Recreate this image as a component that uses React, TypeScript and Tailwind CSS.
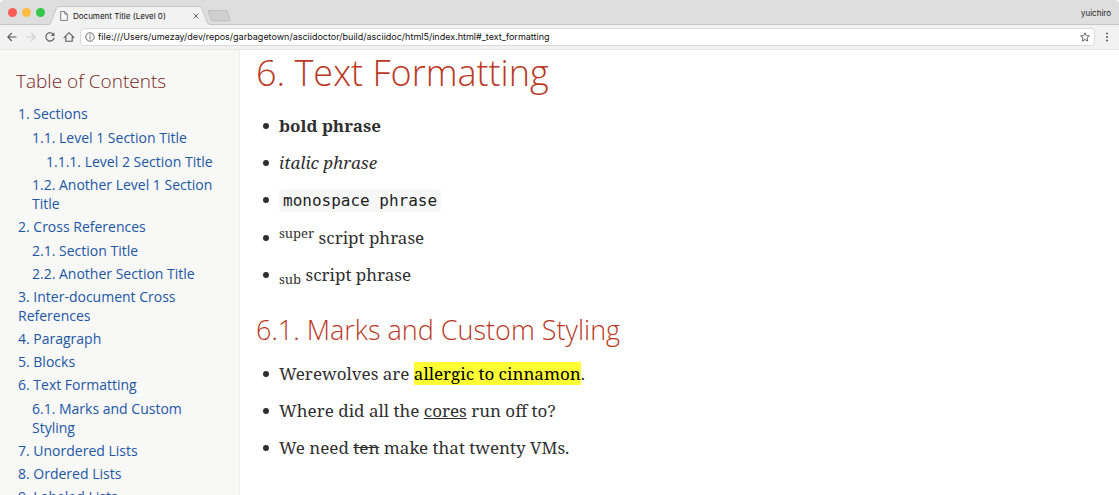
import type { ReactNode } from "react";

type Entry = { id: string; title: string; children?: Entry[] };

const toc: Entry[] = [
  {
    id: "_sections",
    title: "1. Sections",
    children: [
      {
        id: "_level_1",
        title: "1.1. Level 1 Section Title",
        children: [{ id: "_level_2", title: "1.1.1. Level 2 Section Title" }],
      },
      { id: "_another_level_1", title: "1.2. Another Level 1 Section Title" },
    ],
  },
  {
    id: "_cross_references",
    title: "2. Cross References",
    children: [
      { id: "_section_title", title: "2.1. Section Title" },
      { id: "_another_section_title", title: "2.2. Another Section Title" },
    ],
  },
  { id: "_inter_document", title: "3. Inter-document Cross References" },
  { id: "_paragraph", title: "4. Paragraph" },
  { id: "_blocks", title: "5. Blocks" },
  {
    id: "_text_formatting",
    title: "6. Text Formatting",
    children: [{ id: "_marks", title: "6.1. Marks and Custom Styling" }],
  },
  { id: "_unordered_lists", title: "7. Unordered Lists" },
  { id: "_ordered_lists", title: "8. Ordered Lists" },
  { id: "_labeled_lists", title: "9. Labeled Lists" },
];

function TocList({ entries }: { entries: Entry[] }) {
  return (
    <ul className="flex flex-col gap-1">
      {entries.map((e) => (
        <li key={e.id}>
          <a href={`#${e.id}`} className="block hover:text-[#1d4b8f]">
            {e.title}
          </a>
          {e.children && (
            <div className="mt-[5px] pl-3.5">
              <TocList entries={e.children} />
            </div>
          )}
        </li>
      ))}
    </ul>
  );
}

function Icon({ children, className = "size-3" }: { children: ReactNode; className?: string }) {
  return (
    <svg
      viewBox="0 0 12 12"
      className={className}
      fill="none"
      stroke="currentColor"
      strokeWidth="1.1"
      aria-hidden="true"
    >
      {children}
    </svg>
  );
}

function TabStrip() {
  return (
    <div className="flex h-[25px] items-end rounded-t border-b border-[#c6c6c6] bg-[#dedede]">
      <div className="flex gap-[5px] self-center pl-2">
        <button aria-label="Close window" className="size-[9px] rounded-full bg-[#fc5b57]" />
        <button aria-label="Minimize window" className="size-[9px] rounded-full bg-[#fdbc40]" />
        <button aria-label="Zoom window" className="size-[9px] rounded-full bg-[#34c84a]" />
      </div>
      <div className="relative -mb-px ml-[3px] h-[19px] w-[163px]">
        <svg
          viewBox="0 0 163 19"
          preserveAspectRatio="none"
          className="absolute inset-0 size-full"
          aria-hidden="true"
        >
          <path
            d="M0 18.5C2 18.5 2.5 17.5 3 16L8 3C8.8 1 9.5 .5 11 .5H151C152.5 .5 153.3 1 154 3L159 16C159.5 17.5 160.5 18.5 163 18.5V19H0Z"
            fill="#f2f2f2"
          />
          <path
            d="M0 18.5C2 18.5 2.5 17.5 3 16L8 3C8.8 1 9.5 .5 11 .5H151C152.5 .5 153.3 1 154 3L159 16C159.5 17.5 160.5 18.5 163 18.5"
            fill="none"
            stroke="#bdbdbd"
            strokeWidth=".8"
          />
        </svg>
        <div className="relative flex h-full items-center pr-3 pl-3">
          <svg
            viewBox="0 0 8 10"
            className="h-2.5 w-2"
            fill="#fafafa"
            stroke="#6f6f6f"
            strokeWidth=".9"
            aria-hidden="true"
          >
            <path d="M.7 .6H4.8L7.3 3.1V9.4H.7ZM4.8 .6V3.1H7.3" />
          </svg>
          <span className="ml-[5px] flex-1 text-[8px] whitespace-nowrap text-[#111]">
            Document Title (Level 0)
          </span>
          <button aria-label="Close tab" className="text-[#555]">
            <svg viewBox="0 0 6 6" className="size-1.5" stroke="currentColor" strokeWidth=".9">
              <path d="M.7 .7 5.3 5.3M5.3 .7 .7 5.3" />
            </svg>
          </button>
        </div>
      </div>
      <button aria-label="New tab" className="-ml-1 self-center pt-2">
        <svg viewBox="0 0 24 12" className="h-3 w-6" aria-hidden="true">
          <path
            d="M2 .5H18.5Q19.8 .5 20.3 1.7L22.9 9.3Q23.3 10.8 22 10.8H6Q4.600 10.8 4.1 9.5L1.2 1.9Q.7 .5 2 .5Z"
            fill="#cfcfcf"
            stroke="#b9b9b9"
            strokeWidth=".8"
          />
        </svg>
      </button>
      <button className="mr-2 ml-auto self-center pt-0.5 text-[8px] text-[#222]">yuichiro</button>
    </div>
  );
}

function Toolbar() {
  return (
    <div className="flex h-[25px] items-center border-b border-[#e4e4e4] bg-[#f2f2f2] px-1.5 text-[#5a5a5a]">
      <div className="flex gap-[7px]">
        <button aria-label="Back">
          <Icon>
            <path d="M10.5 6H2M5.8 2 1.8 6 5.8 10" />
          </Icon>
        </button>
        <button aria-label="Forward" className="text-[#cfcfcf]">
          <Icon>
            <path d="M1.5 6H10M6.2 2 10.2 6 6.2 10" />
          </Icon>
        </button>
        <button aria-label="Reload">
          <Icon>
            <path d="M9.6 3.6A4.2 4.2 0 1 0 10.2 6.6" />
            <path d="M10.4 1.3V4.9H6.8Z" fill="currentColor" stroke="none" />
          </Icon>
        </button>
        <button aria-label="Home">
          <Icon>
            <path d="M1.3 6.3 6 1.7 10.7 6.3H9.2V10.3H2.8V6.3Z" />
          </Icon>
        </button>
      </div>
      <div className="ml-[5px] flex h-[18px] flex-1 items-center rounded-sm border border-[#dadada] bg-white px-1">
        <Icon className="size-2.5">
          <circle cx="6" cy="6" r="5" />
          <path d="M6 5.2V9M6 3V4.3" />
        </Icon>
        <input
          aria-label="Address"
          className="ml-[3px] min-w-0 flex-1 bg-transparent text-[9px] text-[#111] outline-none"
          defaultValue="file:///Users/umezay/dev/repos/garbagetown/asciidoctor/build/asciidoc/html5/index.html#_text_formatting"
        />
        <button aria-label="Bookmark this page">
          <Icon className="size-2.5">
            <path d="M6 .9 7.5 4.4 11.3 4.7 8.4 7.2 9.3 11 6 9 2.7 11 3.6 7.2 .7 4.7 4.5 4.4Z" />
          </Icon>
        </button>
      </div>
      <button aria-label="Menu" className="ml-1.5">
        <svg viewBox="0 0 12 12" className="size-3" fill="currentColor" aria-hidden="true">
          <circle cx="6" cy="2.5" r="1" />
          <circle cx="6" cy="6" r="1" />
          <circle cx="6" cy="9.5" r="1" />
        </svg>
      </button>
    </div>
  );
}

function BulletList({ children }: { children: ReactNode }) {
  return (
    <ul className="flex flex-col gap-2.5 pl-[7px] font-['Noto_Serif','Droid_Serif','DejaVu_Serif',serif] text-[17px] leading-[27px]">
      {children}
    </ul>
  );
}

function Item({ children }: { children: ReactNode }) {
  return (
    <li className="flex items-center gap-2.5 before:size-1.5 before:shrink-0 before:rounded-full before:bg-current">
      <p>{children}</p>
    </li>
  );
}

export default function App() {
  return (
    <div className="flex h-screen flex-col overflow-hidden bg-white">
      <header className="shrink-0 font-['Inter','Liberation_Sans',sans-serif]">
        <TabStrip />
        <Toolbar />
      </header>
      <div className="flex min-h-0 flex-1 font-['Open_Sans','Noto_Sans',sans-serif]">
        <nav
          aria-label="Table of Contents"
          className="w-60 shrink-0 overflow-hidden border-r border-[#efefed] bg-[#f8f8f7] px-4 pt-[18px]"
        >
          <h2 className="text-[19px] leading-[27px] font-light text-[#7a2518]">Table of Contents</h2>
          <div className="mt-[9px] pl-0.5 text-[14px] leading-[19px] text-[#2156a5]">
            <TocList entries={toc} />
          </div>
        </nav>
        <main className="min-w-0 flex-1 overflow-hidden px-4 text-[#2f2f2f]">
          <h1 className="mb-[17px] text-[36px] leading-[45px] font-light text-[#ba3925]">
            6. Text Formatting
          </h1>
          <BulletList>
            <Item>
              <strong className="font-bold">bold phrase</strong>
            </Item>
            <Item>
              <em>italic phrase</em>
            </Item>
            <Item>
              <code className="rounded bg-[#f7f7f8] px-1 py-0.5 font-['Droid_Sans_Mono','DejaVu_Sans_Mono',monospace] text-[16px] text-black/90">
                monospace phrase
              </code>
            </Item>
            <Item>
              <sup className="text-[13px]">super</sup> script phrase
            </Item>
            <Item>
              <sub className="text-[13px]">sub</sub> script phrase
            </Item>
          </BulletList>
          <h2 className="mt-[25px] mb-[13px] text-[27px] leading-[34px] font-light text-[#ba3925]">
            6.1. Marks and Custom Styling
          </h2>
          <BulletList>
            <Item>
              Werewolves are <mark className="bg-[#ffff33] text-black">allergic to cinnamon</mark>.
            </Item>
            <Item>
              Where did all the <u>cores</u> run off to?
            </Item>
            <Item>
              We need <s>ten</s> make that twenty VMs.
            </Item>
          </BulletList>
        </main>
      </div>
    </div>
  );
}
